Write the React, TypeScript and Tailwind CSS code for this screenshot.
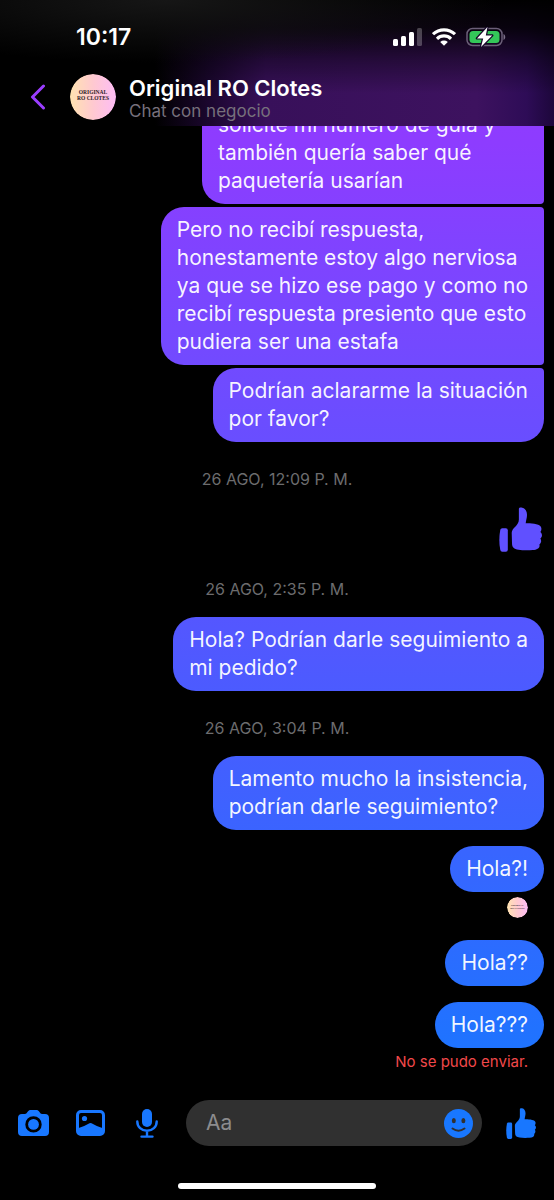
import type { ReactNode } from 'react';
import clsx from 'clsx';

function ThumbIcon({ className }: { className?: string }) {
  return (
    <svg viewBox="0 0 132 136" fill="currentColor" className={className} aria-hidden="true">
      <path d="M10 64h11q6 0 6 6v60q0 6-6 6H10q-5 0-6-5Q-2 100 4 69q1-5 6-5Z" />
      <path d="M39 78c0-15 22-22 22-41V5c0-4 5-5 10-4 9 2 15 10 15 22 0 10-3 17-4 26 14 0 40 1 46 10 4 6 2 12-1 17 7 6 6 15 0 20 4 6 3 13-3 18 3 11-7 16-20 17-15 1-32 1-44-1-14-2-20-7-20-19Z" />
    </svg>
  );
}

function SignalIcon() {
  return (
    <svg viewBox="0 0 29 18" className="w-[29px] h-[18px]" aria-hidden="true">
      <g fill="#fff">
        <rect x="0" y="11" width="5" height="7" rx="1.5" />
        <rect x="8" y="8" width="5" height="10" rx="1.5" />
        <rect x="16" y="4" width="5" height="14" rx="1.5" />
        <rect x="24" y="0" width="5" height="18" rx="1.5" opacity=".25" />
      </g>
    </svg>
  );
}

function WifiIcon() {
  return (
    <svg viewBox="0 0 24 18" className="w-6 h-[18px]" fill="none" stroke="#fff" strokeWidth="3.2" aria-hidden="true">
      <path d="M1 6.2a16 16 0 0 1 22 0" />
      <path d="M5 10.8a10 10 0 0 1 14 0" />
      <path d="M12 17.8 8.2 14a5.6 5.6 0 0 1 7.6 0Z" fill="#fff" stroke="none" />
    </svg>
  );
}

function BatteryIcon() {
  return (
    <svg viewBox="0 0 40 20" className="w-10 h-5" aria-hidden="true">
      <rect x="1" y="1.5" width="35" height="17" rx="5.5" fill="none" stroke="#6b5f78" strokeWidth="1.5" />
      <rect x="3.5" y="4" width="30" height="12" rx="3.5" fill="#34c759" />
      <path d="M37.5 7v6c2.3-.8 2.3-5.2 0-6Z" fill="#7b6f88" />
      <path
        d="M21.5 0 11 11.4h6.2L15 20 26.200 8.400h-6.400Z"
        fill="#fff"
        stroke="#150628"
        strokeWidth="2.4"
        strokeLinejoin="round"
        paintOrder="stroke"
      />
    </svg>
  );
}

function CameraIcon() {
  return (
    <svg viewBox="0 0 31 26" className="w-[31px] h-[26px]" fill="currentColor" aria-hidden="true">
      <path
        fillRule="evenodd"
        d="M4 4h3c2 0 3-4 5-4h7c2 0 3 4 5 4h3q4 0 4 4v14q0 4-4 4H4q-4 0-4-4V8q0-4 4-4Zm11.5 2.2a8.2 8.2 0 1 0 0 16.4 8.2 8.2 0 0 0 0-16.4Z"
      />
      <circle cx="15.5" cy="14.4" r="5.4" />
    </svg>
  );
}

function PhotoIcon() {
  return (
    <svg viewBox="0 0 29 26" className="w-[29px] h-[26px]" aria-hidden="true">
      <rect x="1.5" y="1.5" width="26" height="23" rx="3.5" fill="none" stroke="currentColor" strokeWidth="3" />
      <circle cx="8.5" cy="8.5" r="2.6" fill="currentColor" />
      <path d="M2 18.2Q9 16 12.5 13.7 14.5 12.5 16.5 13.7 20 16 27 18.2V25H2Z" fill="currentColor" />
    </svg>
  );
}

function MicIcon() {
  return (
    <svg viewBox="0 0 22 29" className="w-[22px] h-[29px]" fill="none" stroke="currentColor" strokeWidth="2.4" strokeLinecap="round" aria-hidden="true">
      <rect x="6" y="0" width="10" height="18" rx="5" fill="currentColor" stroke="none" />
      <path d="M1.3 12.5C1.3 18 5.5 21.8 11 21.8S20.7 18 20.7 12.5M11 22v5M5.500 27.600h11" />
    </svg>
  );
}

function SmileIcon() {
  return (
    <svg viewBox="0 0 29 29" className="w-[29px] h-[29px]" aria-hidden="true">
      <circle cx="14.5" cy="14.5" r="14.5" fill="#1877ff" />
      <ellipse cx="9.8" cy="11.7" rx="2" ry="2.6" fill="#303030" />
      <ellipse cx="19.4" cy="11.7" rx="2" ry="2.6" fill="#303030" />
      <path d="M8.5 19.500q6 4.500 12 0" fill="none" stroke="#303030" strokeWidth="2" strokeLinecap="round" />
    </svg>
  );
}

function Avatar({ small }: { small?: boolean }) {
  return (
    <svg
      viewBox="0 0 46 46"
      className={clsx('shrink-0 rounded-full', small ? 'size-[21px]' : 'size-[46px]')}
      role="img"
      aria-label="Original RO Clotes"
    >
      <defs>
        <linearGradient id={small ? 'seen' : 'profile'} x1="0" x2="1">
          <stop offset="0" stopColor="#ffe3b0" />
          <stop offset=".5" stopColor="#ffc9d0" />
          <stop offset="1" stopColor="#fdbcf5" />
        </linearGradient>
      </defs>
      <circle cx="23" cy="23" r="23" fill={small ? 'url(#seen)' : 'url(#profile)'} />
      <g fill="#2b2026" fontFamily="Liberation Serif, serif" fontSize="5.5" fontWeight="700" textAnchor="middle">
        <text x="23" y="20">ORIGINAL</text>
        <text x="23" y="26">RO CLOTES</text>
      </g>
    </svg>
  );
}

// the gradient is fixed to the window, so every bubble shows its own slice of it
function Bubble({ children, className }: { children: ReactNode; className?: string }) {
  return (
    <div
      className={clsx(
        'shrink-0 px-4 py-[9px] text-[21px] leading-[28px] text-white/95 whitespace-nowrap',
        'bg-fixed bg-[linear-gradient(to_bottom,#963bff_0%,#8d3cff_12%,#724aff_30%,#5556ff_51%,#3865ff_71%,#1f73ff_87%,#1478ff_100%)]',
        className,
      )}
    >
      {children}
    </div>
  );
}

function Timestamp({ children }: { children: ReactNode }) {
  return (
    <time className="shrink-0 self-center mt-[27px] pl-[10px] text-[16px] leading-5 text-[#6c6c6e]">{children}</time>
  );
}

export default function App() {
  return (
    <div className="flex flex-col h-screen overflow-hidden bg-black text-white font-['Inter',sans-serif]">
      <header className="shrink-0 h-[126px] bg-[radial-gradient(60%_50%_at_30%_0%,#161616_0%,transparent_100%),linear-gradient(to_bottom,#000_0%,#000000d8_22%,#00000060_48%,transparent_74%),linear-gradient(to_right,#000_28%,#1c0730_38%,#38105a_48%,#3d125f_86%,#2e0c57_95%,#1d073b_100%)]">
        <div className="flex items-center justify-between h-[74px] pl-[76px] pr-12">
          <span className="text-[23px] leading-7 font-semibold">10:17</span>
          <div className="flex items-center gap-[10px]">
            <SignalIcon />
            <WifiIcon />
            <BatteryIcon />
          </div>
        </div>
        <div className="flex items-center h-[46px] pl-[30px]">
          <button type="button" aria-label="Atrás" className="mr-6 text-[#9a3dff]">
            <svg viewBox="0 0 16 26" className="w-4 h-[26px]" fill="none" stroke="currentColor" strokeWidth="3" strokeLinecap="round" strokeLinejoin="round">
              <path d="M13.5 2 2.5 13l11 11" />
            </svg>
          </button>
          <Avatar />
          <div className="ml-[13px] pt-1">
            <h1 className="text-[22px] leading-6 font-semibold">Original RO Clotes</h1>
            <p className="text-[17px] leading-[22px] text-[#77707c]">Chat con negocio</p>
          </div>
        </div>
      </header>

      <main className="flex flex-col flex-1 min-h-0 justify-end items-end pr-[10px] overflow-hidden">
        <Bubble className="w-[342px] rounded-[23px] rounded-r-[4px]">
          solicité mi número de guía y
          <br />
          también quería saber qué
          <br />
          paquetería usarían
        </Bubble>
        <Bubble className="mt-[3px] rounded-[23px] rounded-r-[4px]">
          Pero no recibí respuesta,
          <br />
          honestamente estoy algo nerviosa
          <br />
          ya que se hizo ese pago y como no
          <br />
          recibí respuesta presiento que esto
          <br />
          pudiera ser una estafa
        </Bubble>
        <Bubble className="mt-[3px] rounded-[23px] rounded-tr-[4px]">
          Podrían aclararme la situación
          <br />
          por favor?
        </Bubble>

        <Timestamp>26 AGO, 12:09 P. M.</Timestamp>
        <ThumbIcon className="shrink-0 mt-[18px] mr-[2px] w-[43px] h-[45px] text-[#6050ff]" />

        <Timestamp>26 AGO, 2:35 P. M.</Timestamp>
        <Bubble className="mt-[18px] rounded-[23px]">
          Hola? Podrían darle seguimiento a
          <br />
          mi pedido?
        </Bubble>

        <Timestamp>26 AGO, 3:04 P. M.</Timestamp>
        <Bubble className="mt-[18px] rounded-[23px]">
          Lamento mucho la insistencia,
          <br />
          podrían darle seguimiento?
        </Bubble>
        <Bubble className="mt-4 rounded-[23px]">Hola?!</Bubble>
        <div className="shrink-0 mt-[5px] mr-4">
          <Avatar small />
        </div>
        <Bubble className="mt-[22px] rounded-[23px]">Hola??</Bubble>
        <Bubble className="mt-4 rounded-[23px]">Hola???</Bubble>
        <p className="shrink-0 mt-1 mr-4 text-[15px] leading-5 text-[#f0484a]">No se pudo enviar.</p>
      </main>

      <footer className="shrink-0 pt-7 pb-[11px]">
        <form className="flex items-center h-[46px] px-[18px] text-[#1877ff]">
          <button type="button" aria-label="Cámara">
            <CameraIcon />
          </button>
          <button type="button" aria-label="Galería" className="ml-[27px]">
            <PhotoIcon />
          </button>
          <button type="button" aria-label="Nota de voz" className="ml-[31px]">
            <MicIcon />
          </button>
          <div className="flex items-center flex-1 min-w-0 h-[46px] ml-7 pl-5 pr-[9px] rounded-full bg-[#303030]">
            <input
              type="text"
              aria-label="Mensaje"
              placeholder="Aa"
              className="flex-1 min-w-0 bg-transparent text-[21px] leading-7 text-white outline-none placeholder:text-[#8c8c8e]"
            />
            <button type="button" aria-label="Emojis">
              <SmileIcon />
            </button>
          </div>
          <button type="button" aria-label="Me gusta" className="ml-6">
            <ThumbIcon className="w-[30px] h-[31px]" />
          </button>
        </form>
        <div className="w-[198px] h-[6px] mt-[37px] mx-auto rounded-full bg-white" />
      </footer>
    </div>
  );
}
